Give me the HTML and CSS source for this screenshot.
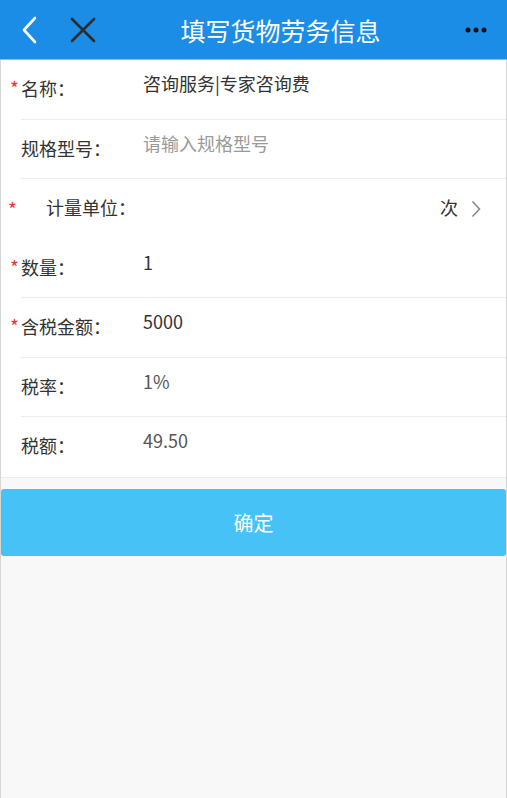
FILE: index.html
```html
<!DOCTYPE html>
<html lang="zh-CN">
<head>
    <meta charset="UTF-8">
    <meta name="viewport" content="width=device-width, initial-scale=1.0">
    <title>填写货物劳务信息</title>
    <link rel="stylesheet" href="styles.css">
</head>
<body>
    <div class="page">
        <header class="topbar">
            <div class="topbar-left">
                <svg class="icon-back" width="20" height="30" viewBox="0 0 20 30">
                    <path d="M14 3 L3 15 L14 27" fill="none" stroke="#fff" stroke-width="2.6" stroke-linecap="round" stroke-linejoin="round"/>
                </svg>
                <svg class="icon-close" width="26" height="26" viewBox="0 0 26 26">
                    <path d="M2 2 L24 24 M24 2 L2 24" fill="none" stroke="#2b2b2b" stroke-width="2.6" stroke-linecap="round"/>
                </svg>
            </div>
            <h1 class="title">填写货物劳务信息</h1>
            <div class="topbar-right">
                <svg width="22" height="6" viewBox="0 0 22 6">
                    <circle cx="3" cy="3" r="2.5" fill="#111"/>
                    <circle cx="11" cy="3" r="2.5" fill="#111"/>
                    <circle cx="19" cy="3" r="2.5" fill="#111"/>
                </svg>
            </div>
        </header>

        <form class="form">
            <div class="row">
                <span class="star">*</span>
                <span class="label">名称：</span>
                <span class="value">咨询服务|专家咨询费</span>
            </div>
            <div class="row">
                <span class="label">规格型号：</span>
                <span class="value placeholder">请输入规格型号</span>
            </div>
            <div class="row row-select">
                <span class="star">*</span>
                <span class="label">计量单位：</span>
                <span class="select-value">次</span>
                <svg class="arrow" width="10" height="18" viewBox="0 0 10 18">
                    <path d="M1.5 1.5 L8.5 9 L1.5 16.5" fill="none" stroke="#8a8a8a" stroke-width="1.6"/>
                </svg>
            </div>
            <div class="row">
                <span class="star">*</span>
                <span class="label">数量：</span>
                <span class="value">1</span>
            </div>
            <div class="row">
                <span class="star">*</span>
                <span class="label">含税金额：</span>
                <span class="value">5000</span>
            </div>
            <div class="row">
                <span class="label">税率：</span>
                <span class="value muted">1%</span>
            </div>
            <div class="row last">
                <span class="label">税额：</span>
                <span class="value muted">49.50</span>
            </div>
        </form>

        <button type="button" class="btn-ok">确定</button>
    </div>
</body>
</html>
```

FILE: styles.css
```css
* {
    box-sizing: border-box;
}

body {
    margin: 0;
    font-family: "Noto Sans CJK SC", "Noto Sans", sans-serif;
    background-color: #f8f8f8;
}

.page {
    min-height: 798px;
    border-left: 1px solid #d6d6d6;
    border-right: 1px solid #d6d6d6;
    background-color: #f8f8f8;
}

.topbar {
    display: flex;
    align-items: center;
    height: 60px;
    margin: 0 -1px;
    background-color: #1b8de6;
    border-bottom: 1px solid #7fbce9;
}

.topbar-left {
    width: 121px;
    display: flex;
    align-items: center;
    padding-left: 21px;
}

.icon-close {
    margin-left: 29px;
}

.title {
    flex: 1;
    margin: 0;
    text-align: center;
    color: #fff;
    font-size: 25px;
    font-weight: normal;
    line-height: 60px;
}

.topbar-right {
    width: 67px;
    display: flex;
    justify-content: flex-end;
    padding-right: 20px;
    padding-top: 1px;
}

.form {
    background: #fff;
    border-bottom: 1px solid #ececec;
}

.row {
    display: flex;
    align-items: flex-start;
    height: 59.5px;
    margin-left: 20px;
    border-bottom: 1px solid #ececec;
    color: #333;
    font-size: 18px;
}

.row.last {
    border-bottom: none;
}

.star {
    width: 13px;
    margin-left: -13px;
    margin-top: 16px;
    color: #e53935;
    font-size: 19px;
    line-height: 24px;
    text-align: center;
}

.label {
    width: 122px;
    padding-top: 16px;
    line-height: 24px;
}

.value {
    padding-top: 11px;
    line-height: 24px;
}

.placeholder {
    color: #9a9a9a;
}

.muted {
    color: #555;
}

.row-select {
    align-items: center;
    border-bottom: none;
}

.row-select .star {
    margin-top: 0;
    margin-left: -15px;
}

.row-select .label {
    padding-top: 0;
    padding-left: 27px;
    width: auto;
    flex: 1;
    margin-top: -3px;
}

.select-value {
    margin-right: 13px;
    margin-top: -3px;
    line-height: 24px;
}

.arrow {
    margin-right: 25px;
}

.btn-ok {
    display: block;
    width: 100%;
    height: 67px;
    margin-top: 11px;
    border: none;
    border-radius: 3px;
    background: #47c2f6;
    color: #fff;
    font-family: "Noto Sans CJK SC", sans-serif;
    font-size: 20px;
    cursor: pointer;
}
```
